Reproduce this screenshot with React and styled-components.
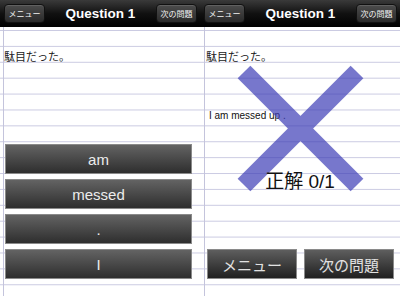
import React from 'react';
import styled, { createGlobalStyle } from 'styled-components';

const GlobalStyle = createGlobalStyle`
  html, body {
    margin: 0;
    padding: 0;
    background: #fff;
  }
  body {
    font-family: "Liberation Sans", "Noto Sans CJK JP", sans-serif;
  }
`;

const Page = styled.div`
  display: flex;
  width: 400px;
  height: 296px;
  overflow: hidden;
`;

const Screen = styled.div`
  display: flex;
  flex-direction: column;
  width: 200px;
  height: 296px;
`;

const Header = styled.header`
  display: flex;
  align-items: center;
  justify-content: space-between;
  height: 27px;
  padding: 0 3px 0 4px;
  box-sizing: border-box;
  background: linear-gradient(#3a3a3a, #111 50%, #000);
`;

const NavButton = styled.button`
  width: 41px;
  height: 19px;
  padding: 0;
  border: 1px solid #111;
  border-radius: 4px;
  background: linear-gradient(#4c4c4c, #2a2a2a);
  box-shadow: inset 0 1px 0 rgba(255, 255, 255, 0.12);
  color: #f2f2f2;
  font-family: "Liberation Sans", "Noto Sans CJK JP", sans-serif;
  font-size: 8px;
`;

const Title = styled.h1`
  flex: 1;
  margin: 0;
  text-align: center;
  color: #fff;
  font-size: 13.5px;
  font-weight: bold;
`;

const Paper = styled.div`
  position: relative;
  flex: 1;
  display: flex;
  flex-direction: column;
  padding: 23px 0 17px;
  box-sizing: border-box;
  background-color: #fff;
  background-image:
    linear-gradient(to right, transparent ${(p) => p.$margin}px, #c4c4dc ${(p) => p.$margin}px, #c4c4dc ${(p) => p.$margin + 1}px, transparent ${(p) => p.$margin + 1}px),
    linear-gradient(to bottom, transparent 14.9px, #cbcbe2 14.9px);
  background-size: 100% 100%, 100% 15.9px;
  background-position: 0 0, 0 -11.9px;
`;

const Prompt = styled.p`
  margin: 0;
  padding-left: ${(p) => p.$indent}px;
  font-size: 11px;
  line-height: 14px;
  color: #222;
`;

const Choices = styled.div`
  display: flex;
  flex-direction: column;
  gap: 5px;
  margin-top: auto;
  padding-left: 5px;
`;

const ChoiceButton = styled.button`
  width: 187px;
  height: 30px;
  padding: 0;
  border: 1px solid #8a8a8a;
  background: linear-gradient(#636363, #2e2e2e);
  color: #ececec;
  font-family: "Liberation Sans", sans-serif;
  font-size: 15px;
`;

const Answer = styled.p`
  margin: 46px 0 0;
  padding-left: 9px;
  font-size: 10px;
  line-height: 12px;
  color: #111;
`;

const Score = styled.p`
  position: relative;
  z-index: 2;
  margin: 49px 0 0;
  text-align: center;
  font-size: 19px;
  line-height: 22px;
  color: #111;
`;

const Cross = styled.svg`
  position: absolute;
  left: 35px;
  top: 36px;
  z-index: 1;
`;

const Actions = styled.div`
  display: flex;
  gap: 7px;
  margin-top: auto;
  padding-left: 7px;
`;

const ActionButton = styled.button`
  width: 90px;
  height: 30px;
  padding: 0;
  border: 1px solid #8a8a8a;
  background: linear-gradient(#5e5e5e, #202020);
  color: #e2e2e2;
  font-family: "Liberation Sans", "Noto Sans CJK JP", sans-serif;
  font-size: 15px;
`;

const ScreenHeader = () => (
  <Header>
    <NavButton>メニュー</NavButton>
    <Title>Question 1</Title>
    <NavButton>次の問題</NavButton>
  </Header>
);

const choices = ['am', 'messed', '.', 'I'];

const App = () => {
  return (
    <>
      <GlobalStyle />
      <Page>
        <Screen>
          <ScreenHeader />
          <Paper $margin={3}>
            <Prompt $indent={4}>駄目だった。</Prompt>
            <Choices>
              {choices.map((c) => (
                <ChoiceButton key={c}>{c}</ChoiceButton>
              ))}
            </Choices>
          </Paper>
        </Screen>
        <Screen>
          <ScreenHeader />
          <Paper $margin={4}>
            <Prompt $indent={6}>駄目だった。</Prompt>
            <Answer>I am messed up .</Answer>
            <Cross width="131" height="131" viewBox="0 0 131 131">
              <g stroke="#3e3eb7" strokeWidth="18" opacity="0.7">
                <line x1="9" y1="9" x2="122" y2="122" />
                <line x1="122" y1="9" x2="9" y2="122" />
              </g>
            </Cross>
            <Score>正解 0/1</Score>
            <Actions>
              <ActionButton>メニュー</ActionButton>
              <ActionButton>次の問題</ActionButton>
            </Actions>
          </Paper>
        </Screen>
      </Page>
    </>
  );
};

export default App;
